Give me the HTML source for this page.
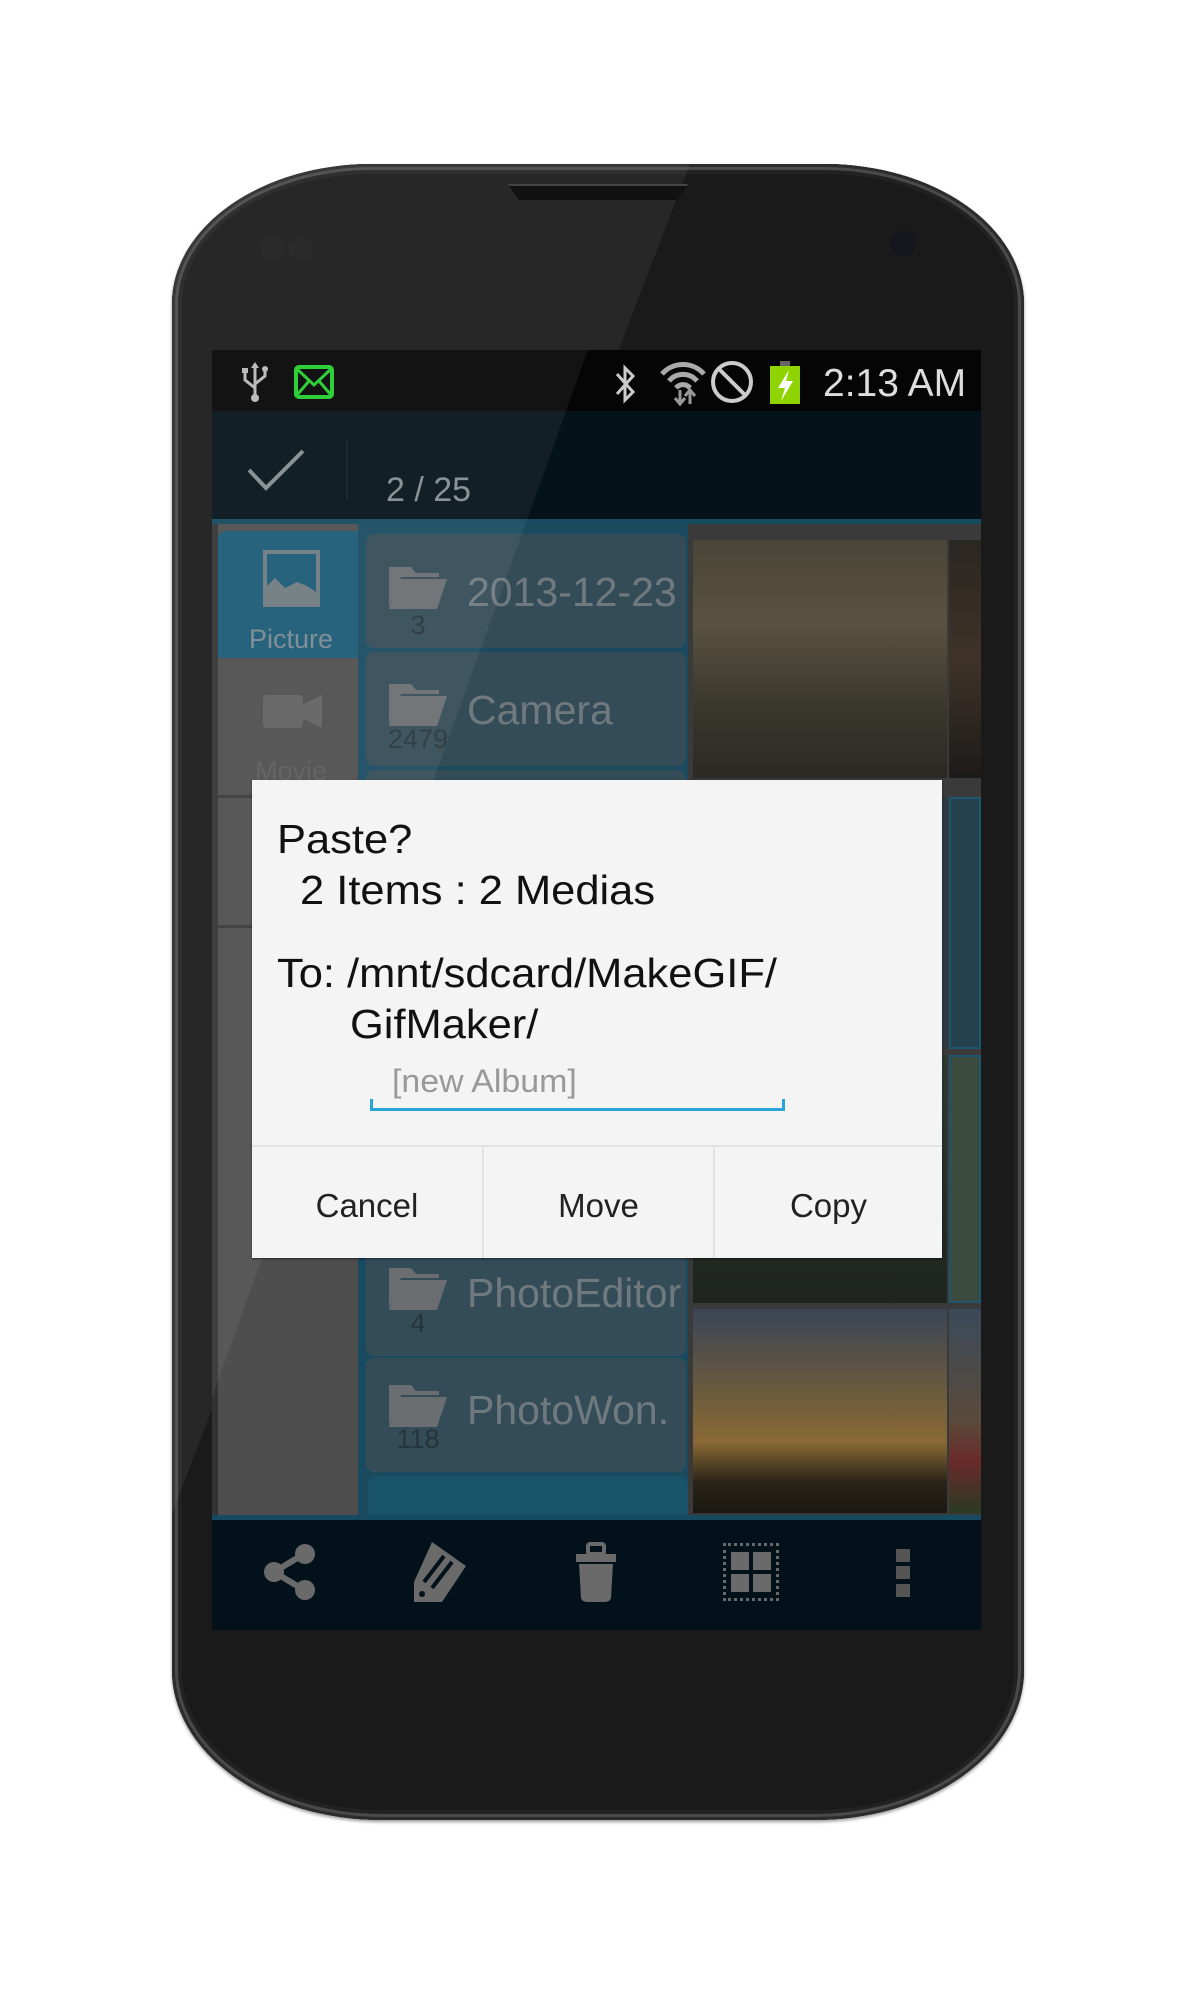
<!DOCTYPE html>
<html><head><meta charset="utf-8"><style>
*{margin:0;padding:0;box-sizing:border-box}
body{width:1195px;height:1994px;background:#fff;position:relative;overflow:hidden;font-family:"Liberation Sans",sans-serif}
.abs{position:absolute}
#phone{left:172px;top:164px;width:852px;height:1656px;border-radius:200px 200px 210px 210px/140px 140px 150px 150px;background:#1a1a1a;box-shadow:inset 0 0 0 3px #2c2c2c,inset 0 0 0 6px #4a4a4a,inset 0 0 0 10px #222,0 2px 3px rgba(0,0,0,.4);overflow:hidden}
#screen{left:212px;top:350px;width:769px;height:1280px;background:#0a171d;overflow:hidden}
.t{position:absolute;white-space:nowrap;line-height:1}
.item{position:absolute;left:366px;width:320px;background:#334c58;border-radius:8px}
.ph{position:absolute}
.dt{position:absolute;white-space:nowrap;line-height:1;font-size:41px;color:#111;transform:scaleX(1.06);transform-origin:left}
</style></head><body>
<div id="phone" class="abs"><svg class="abs" style="left:0;top:0" width="852" height="1656"><path d="M0 0 L518 0 L-4 1360Z" fill="rgba(255,255,255,0.06)"/></svg></div>
<!-- earpiece -->
<div class="abs" style="left:508px;top:184px;width:180px;height:16px;background:#111;clip-path:polygon(0 0,100% 0,94% 100%,6% 100%);border-top:2px solid #444"></div>
<div class="abs" style="left:260px;top:236px;width:26px;height:26px;border-radius:50%;background:#2a2a2a"></div>
<div class="abs" style="left:288px;top:236px;width:26px;height:26px;border-radius:50%;background:#2a2a2a"></div>
<div class="abs" style="left:890px;top:230px;width:26px;height:26px;border-radius:50%;background:#16161e"></div>

<div id="screen" class="abs">
 <div class="abs" style="left:0;top:0;width:769px;height:61px;background:#050505"></div>
 <div class="abs" style="left:0;top:61px;width:769px;height:110px;background:#04121a"></div>
 <div class="abs" style="left:0;top:169px;width:769px;height:5px;background:#154a60"></div>
 <!-- sidebar -->
 <div class="abs" style="left:0;top:174px;width:146px;height:996px;background:#4e4e4e"></div>
 <div class="abs" style="left:0;top:174px;width:6px;height:996px;background:#333"></div>
 <div class="abs" style="left:6px;top:181px;width:140px;height:127px;background:#1b5a75;border-radius:8px 0 0 0"></div>
 <div class="abs" style="left:6px;top:445px;width:140px;height:3px;background:#3a3a3a"></div>
 <div class="abs" style="left:6px;top:575px;width:140px;height:3px;background:#3a3a3a"></div>
 <div class="abs" style="left:51px;top:200px;width:57px;height:57px;border:4px solid #6f7b80"></div>
 <svg class="abs" style="left:55px;top:222px" width="49" height="31"><path d="M0 31 L0 14 L8 6 L18 16 L30 10 L40 14 L49 20 L49 31Z" fill="#6f7b80"/></svg>
 <div class="t" style="left:0;width:158px;text-align:center;top:276px;font-size:27px;color:#7a8a90">Picture</div>
 <div class="abs" style="left:51px;top:345px;width:40px;height:33px;background:#616161;border-radius:4px"></div>
 <svg class="abs" style="left:90px;top:345px" width="20" height="33"><path d="M0 10 L20 0 L20 33 L0 23Z" fill="#616161"/></svg>
 <div class="t" style="left:0;width:158px;text-align:center;top:408px;font-size:27px;color:#5c5c5c">Movie</div>
 <!-- folder list -->
 <div class="abs" style="left:146px;top:174px;width:330px;height:996px;background:#194a60"></div>
 <!-- photos -->
 <div class="abs" style="left:476px;top:174px;width:293px;height:996px;background:#3a3a3a"></div>
 <div class="ph" style="left:481px;top:190px;width:254px;height:238px;background:linear-gradient(180deg,#4a4537 0%,#5a5240 35%,#3a372d 70%,#2a2a24 100%)"></div>
 <div class="ph" style="left:737px;top:190px;width:32px;height:238px;background:linear-gradient(180deg,#2a2622,#3f3328 50%,#1d1b1a)"></div>
 <div class="ph" style="left:481px;top:447px;width:254px;height:252px;background:#2c3a42"></div>
 <div class="ph" style="left:737px;top:447px;width:32px;height:252px;background:#25414e;border:2px solid #1c5670"></div>
 <div class="ph" style="left:481px;top:705px;width:254px;height:248px;background:linear-gradient(180deg,#2e3a30,#1f241f)"></div>
 <div class="ph" style="left:737px;top:705px;width:32px;height:248px;background:#3a4a3c;border:2px solid #1c5670"></div>
 <div class="ph" style="left:481px;top:959px;width:254px;height:204px;background:linear-gradient(180deg,#3a4556 0%,#6a5a3e 40%,#8a6a34 65%,#2a2418 85%,#1a1812 100%)"></div>
 <div class="ph" style="left:737px;top:959px;width:32px;height:204px;background:linear-gradient(180deg,#3a4a5a,#5a4a3a 55%,#6a2a2a 75%,#2a3a22)"></div>
 <!-- folder items -->
 <div class="item" style="left:154px;top:184px;height:114px"></div>
 <div class="item" style="left:154px;top:302px;height:114px"></div>
 <div class="item" style="left:154px;top:420px;height:114px"></div>
 <div class="item" style="left:154px;top:890px;height:116px"></div>
 <div class="item" style="left:154px;top:1008px;height:114px"></div>
 <div class="item" style="left:156px;top:1126px;height:60px;background:#18536a"></div>
 <svg class="abs" style="left:177px;top:217px" width="58" height="42"><path d="M0 0 H22 L27 6 H50 V10 H12 L0 40Z M0 42 L10 12 H58 L48 42Z" fill="#6b6e70"/></svg>
 <div class="t" style="left:255px;top:222px;font-size:41px;color:#707a7e">2013-12-23</div>
 <div class="t" style="left:177px;width:58px;text-align:center;top:262px;font-size:27px;color:#26353b">3</div>
 <svg class="abs" style="left:177px;top:334px" width="58" height="42"><path d="M0 0 H22 L27 6 H50 V10 H12 L0 40Z M0 42 L10 12 H58 L48 42Z" fill="#6b6e70"/></svg>
 <div class="t" style="left:255px;top:340px;font-size:41px;color:#707a7e">Camera</div>
 <div class="t" style="left:167px;width:78px;text-align:center;top:376px;font-size:27px;color:#26353b">2479</div>
 <svg class="abs" style="left:177px;top:918px" width="58" height="42"><path d="M0 0 H22 L27 6 H50 V10 H12 L0 40Z M0 42 L10 12 H58 L48 42Z" fill="#6b6e70"/></svg>
 <div class="t" style="left:255px;top:923px;font-size:41px;color:#707a7e">PhotoEditor</div>
 <div class="t" style="left:177px;width:58px;text-align:center;top:960px;font-size:27px;color:#26353b">4</div>
 <svg class="abs" style="left:177px;top:1035px" width="58" height="42"><path d="M0 0 H22 L27 6 H50 V10 H12 L0 40Z M0 42 L10 12 H58 L48 42Z" fill="#6b6e70"/></svg>
 <div class="t" style="left:255px;top:1040px;font-size:41px;color:#707a7e">PhotoWon.</div>
 <div class="t" style="left:167px;width:78px;text-align:center;top:1076px;font-size:27px;color:#26353b">118</div>
 <div class="abs" style="left:0;top:1165px;width:769px;height:5px;background:#154a60"></div>
 <div class="abs" style="left:0;top:1170px;width:769px;height:110px;background:#02111a"></div>
 <!-- shine on screen -->
 <svg class="abs" style="left:0;top:0" width="769" height="1280"><path d="M0 0 L376 0 L-44 1170 L0 1170Z" fill="rgba(255,255,255,0.06)"/></svg>
</div>

<!-- status icons -->
<svg class="abs" style="left:240px;top:362px" width="30" height="42"><g fill="none" stroke="#bbb" stroke-width="3"><path d="M15 2 V34"/><path d="M15 26 L5 18 V10 M15 22 L25 14 V8"/></g><circle cx="15" cy="36" r="4" fill="#bbb"/><path d="M11 6 L15 0 L19 6Z" fill="#bbb"/><rect x="2" y="6" width="6" height="5" fill="#bbb"/><circle cx="25" cy="7" r="3" fill="#bbb"/></svg>
<svg class="abs" style="left:294px;top:365px" width="40" height="34"><rect x="2" y="2" width="36" height="30" rx="3" fill="none" stroke="#2fcf3a" stroke-width="4"/><path d="M3 4 L20 20 L37 4 M3 30 L15 16 M37 30 L25 16" fill="none" stroke="#2fcf3a" stroke-width="3"/></svg>
<svg class="abs" style="left:613px;top:362px" width="26" height="44"><path d="M4 12 L20 30 L12 38 V6 L20 14 L4 32" fill="none" stroke="#ccc" stroke-width="3"/></svg>
<svg class="abs" style="left:660px;top:362px" width="46" height="44"><path d="M2 12 A28 28 0 0 1 44 12" fill="none" stroke="#aaa" stroke-width="5"/><path d="M9 19 A18 18 0 0 1 37 19" fill="none" stroke="#aaa" stroke-width="5"/><path d="M16 26 A9 9 0 0 1 30 26" fill="none" stroke="#aaa" stroke-width="5"/><path d="M20 28 V42 M15 36 L20 42 L25 36 M30 42 V28 M25 34 L30 28 L35 34" fill="none" stroke="#999" stroke-width="3"/></svg>
<svg class="abs" style="left:710px;top:360px" width="44" height="44"><circle cx="22" cy="22" r="19" fill="none" stroke="#ccc" stroke-width="4"/><path d="M9 9 L35 35" stroke="#ccc" stroke-width="4"/></svg>
<div class="abs" style="left:780px;top:361px;width:10px;height:6px;background:#666"></div>
<div class="abs" style="left:770px;top:366px;width:30px;height:38px;background:#8fd400"></div>
<svg class="abs" style="left:770px;top:366px" width="30" height="38"><path d="M19 4 L8 22 H15 L11 35 L23 15 H16Z" fill="#fff"/></svg>
<div class="t" style="left:823px;top:364px;font-size:39px;color:#ddd">2:13 AM</div>

<!-- action bar -->
<svg class="abs" style="left:246px;top:448px" width="60" height="44"><path d="M3 22 L20 40 L57 3" fill="none" stroke="#8a9296" stroke-width="4"/></svg>
<div class="abs" style="left:346px;top:440px;width:2px;height:60px;background:#1d2a30"></div>
<div class="t" style="left:386px;top:473px;font-size:34px;color:#8a9296">2 / 25</div>
<!-- bottom icons -->
<svg class="abs" style="left:262px;top:1542px" width="56" height="60"><path d="M12 30 L42 12 M12 30 L42 48" stroke="#6a6a6a" stroke-width="6"/><circle cx="12" cy="30" r="10" fill="#6a6a6a"/><circle cx="43" cy="12" r="10" fill="#6a6a6a"/><circle cx="43" cy="48" r="10" fill="#6a6a6a"/></svg>
<svg class="abs" style="left:414px;top:1542px" width="56" height="60"><path d="M18 0 L52 24 L28 60 L0 60 L0 40Z" fill="#6a6a6a"/><path d="M10 40 L30 14 M18 46 L38 20" stroke="#02111a" stroke-width="4"/><circle cx="8" cy="52" r="3" fill="#02111a"/></svg>
<svg class="abs" style="left:574px;top:1542px" width="44" height="60"><rect x="14" y="2" width="16" height="10" rx="2" fill="none" stroke="#6a6a6a" stroke-width="4"/><rect x="2" y="12" width="40" height="8" fill="#6a6a6a"/><path d="M5 22 H39 L37 56 Q36 60 30 60 H14 Q8 60 7 56Z" fill="#6a6a6a"/></svg>
<div class="abs" style="left:723px;top:1543px;width:56px;height:58px;border:3px dotted #6a6a6a"></div>
<div class="abs" style="left:731px;top:1552px;width:18px;height:18px;background:#6a6a6a"></div>
<div class="abs" style="left:753px;top:1552px;width:18px;height:18px;background:#6a6a6a"></div>
<div class="abs" style="left:731px;top:1574px;width:18px;height:18px;background:#6a6a6a"></div>
<div class="abs" style="left:753px;top:1574px;width:18px;height:18px;background:#6a6a6a"></div>
<div class="abs" style="left:896px;top:1549px;width:14px;height:13px;background:#555"></div>
<div class="abs" style="left:896px;top:1566px;width:14px;height:13px;background:#555"></div>
<div class="abs" style="left:896px;top:1584px;width:14px;height:13px;background:#555"></div>

<!-- dialog -->
<div class="abs" style="left:252px;top:780px;width:690px;height:478px;background:#f4f4f4;box-shadow:0 1px 2px rgba(0,0,0,.5)"></div>
<div class="dt" style="left:277px;top:819px">Paste?</div>
<div class="dt" style="left:300px;top:870px">2 Items : 2 Medias</div>
<div class="dt" style="left:277px;top:953px">To: /mnt/sdcard/MakeGIF/</div>
<div class="dt" style="left:350px;top:1004px">GifMaker/</div>
<div class="t" style="left:392px;top:1065px;font-size:32px;color:#999;transform:scaleX(1.06);transform-origin:left">[new Album]</div>
<div class="abs" style="left:370px;top:1099px;width:415px;height:12px;border:3px solid #2aa3d6;border-top:none"></div>
<div class="abs" style="left:252px;top:1145px;width:690px;height:2px;background:#e2e2e2"></div>
<div class="abs" style="left:482px;top:1147px;width:2px;height:111px;background:#e2e2e2"></div>
<div class="abs" style="left:713px;top:1147px;width:2px;height:111px;background:#e2e2e2"></div>
<div class="t" style="left:252px;width:230px;text-align:center;top:1189px;font-size:33px;color:#222">Cancel</div>
<div class="t" style="left:484px;width:229px;text-align:center;top:1189px;font-size:33px;color:#222">Move</div>
<div class="t" style="left:715px;width:227px;text-align:center;top:1189px;font-size:33px;color:#222">Copy</div>
</body></html>
